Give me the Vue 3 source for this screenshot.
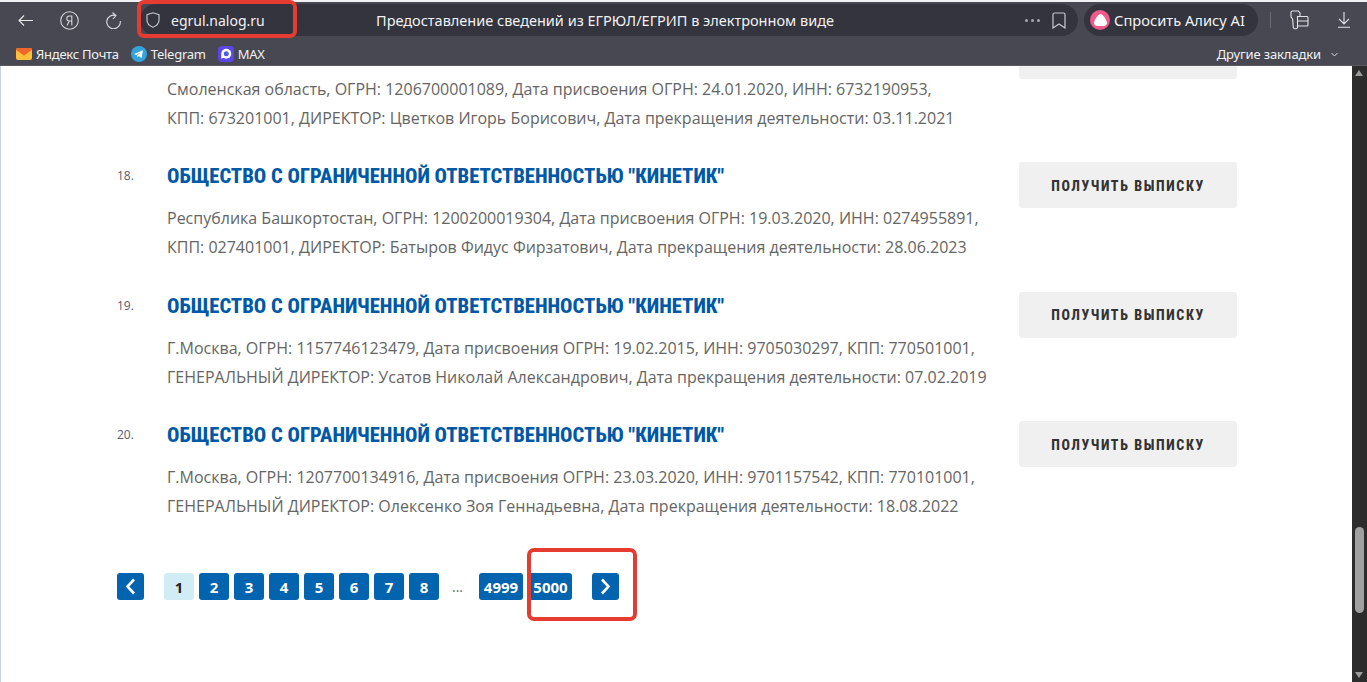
<script setup>
const rows = [
  { n: '', name: '', action: '', lines: ['Смоленская область, ОГРН: 1206700001089, Дата присвоения ОГРН: 24.01.2020, ИНН: 6732190953,', 'КПП: 673201001, ДИРЕКТОР: Цветков Игорь Борисович, Дата прекращения деятельности: 03.11.2021'] },
  { n: '18.', name: 'ОБЩЕСТВО С ОГРАНИЧЕННОЙ ОТВЕТСТВЕННОСТЬЮ "КИНЕТИК"', action: 'ПОЛУЧИТЬ ВЫПИСКУ', lines: ['Республика Башкортостан, ОГРН: 1200200019304, Дата присвоения ОГРН: 19.03.2020, ИНН: 0274955891,', 'КПП: 027401001, ДИРЕКТОР: Батыров Фидус Фирзатович, Дата прекращения деятельности: 28.06.2023'] },
  { n: '19.', name: 'ОБЩЕСТВО С ОГРАНИЧЕННОЙ ОТВЕТСТВЕННОСТЬЮ "КИНЕТИК"', action: 'ПОЛУЧИТЬ ВЫПИСКУ', lines: ['Г.Москва, ОГРН: 1157746123479, Дата присвоения ОГРН: 19.02.2015, ИНН: 9705030297, КПП: 770501001,', 'ГЕНЕРАЛЬНЫЙ ДИРЕКТОР: Усатов Николай Александрович, Дата прекращения деятельности: 07.02.2019'] },
  { n: '20.', name: 'ОБЩЕСТВО С ОГРАНИЧЕННОЙ ОТВЕТСТВЕННОСТЬЮ "КИНЕТИК"', action: 'ПОЛУЧИТЬ ВЫПИСКУ', lines: ['Г.Москва, ОГРН: 1207700134916, Дата присвоения ОГРН: 23.03.2020, ИНН: 9701157542, КПП: 770101001,', 'ГЕНЕРАЛЬНЫЙ ДИРЕКТОР: Олексенко Зоя Геннадьевна, Дата прекращения деятельности: 18.08.2022'] },
]
const pages = ['2', '3', '4', '5', '6', '7', '8']
</script>

<template>
  <div class="window">
    <header class="chrome">
      <div class="toolbar">
        <div class="nav">
          <svg width="15" height="11" viewBox="0 0 15 11" fill="none" stroke="#e8e8ea" stroke-width="1.100"><path d="M15 5.500H1M6 .5 1 5.500l5 5"/></svg>
          <svg width="19" height="19" viewBox="0 0 19 19" fill="none" stroke="#d8d8dc" stroke-width="1.100"><circle cx="9.500" cy="9.500" r="8.800"/><path d="M11.800 14.500V5H9.300a2.500 2.500 0 0 0 0 5h2.500M9.300 10 7 14.500"/></svg>
          <svg width="16" height="17" viewBox="0 0 16 17" fill="none" stroke="#d8d8dc" stroke-width="1.150"><path d="M10 3.600A6.800 6.800 0 1 0 14.300 9M6.500 .5 10 3.500 7 7"/></svg>
        </div>
        <div class="address">
          <div class="host">
            <svg width="14" height="16" viewBox="0 0 14 16" fill="none" stroke="#c2c2c8" stroke-width="1.200"><path d="M7 .8 1 2.600V8c0 3.500 2.600 5.900 6 7.200 3.400-1.300 6-3.700 6-7.200V2.600L7 .8Z"/></svg>
            <span>egrul.nalog.ru</span>
          </div>
          <div class="title">Предоставление сведений из ЕГРЮЛ/ЕГРИП в электронном виде</div>
          <div class="tail">
            <span class="dots"><i></i><i></i><i></i></span>
            <svg width="14" height="17" viewBox="0 0 14 17" fill="none" stroke="#c8c8cc" stroke-width="1.200"><path d="M1 2.500A1.500 1.500 0 0 1 2.500 1h9A1.500 1.500 0 0 1 13 2.500V16l-6-4-6 4V2.500Z"/></svg>
          </div>
        </div>
        <div class="alice">
          <span class="alice-icon"><svg width="13" height="12" viewBox="0 0 13 12"><path d="M6.500 0C9 0 13 6.500 13 9c0 2-1.800 3-3.200 3H3.200C1.800 12 0 11 0 9 0 6.500 4 0 6.500 0Z" fill="#fff"/></svg></span>
          <span>Спросить Алису AI</span>
        </div>
        <div class="divider"></div>
        <svg class="ext" width="19" height="20" viewBox="0 0 19 20" fill="none" stroke="#e4e4e8" stroke-width="1.100"><path d="M1 2.500C1 1.600 1.600 1 2.500 1h5.800l1.700 2v3.500H7.500v10.800c0 .9-.6 1.500-1.500 1.500H4.800c-.8 0-1.400-.5-1.500-1.300L2.600 9 1 7V2.500Z"/><path d="M10 6.500h7c.6 0 1 .4 1 1V15c0 .6-.4 1-1 1H7.500M7.500 11H18"/></svg>
        <svg class="dl" width="12" height="16" viewBox="0 0 12 16" fill="none" stroke="#e4e4e8" stroke-width="1.100"><path d="M6 0v11.500M1 6.800 6 12l5-5.200M0 15.300h12"/></svg>
      </div>
      <div class="bookmarks">
        <div class="mark">
          <svg width="16" height="12" viewBox="0 0 16 12"><rect width="16" height="12" rx="2" fill="#fdbf3a"/><path d="M0 2a2 2 0 0 1 2-2h12a2 2 0 0 1 2 2L8 7.500 0 2Z" fill="#f2652a"/></svg>
          <span>Яндекс Почта</span>
        </div>
        <div class="mark">
          <svg width="16" height="16" viewBox="0 0 16 16"><circle cx="8" cy="8" r="8" fill="#34a4dc"/><path d="M3 7.900 12 4.200 10.600 12 7.800 10 6.400 11.200 6.200 9.200 10.200 5.900 5.300 9 3 7.900Z" fill="#fff"/></svg>
          <span>Telegram</span>
        </div>
        <div class="mark">
          <svg width="16" height="16" viewBox="0 0 16 16"><rect width="16" height="16" rx="4" fill="#5b46e6"/><circle cx="8.300" cy="7.800" r="5" fill="#fff"/><circle cx="8.300" cy="7.800" r="2.500" fill="#4a5de8"/><path d="M3.300 8v4.800L6 11.500Z" fill="#fff"/></svg>
          <span>MAX</span>
        </div>
        <div class="other">
          <span>Другие закладки</span>
          <svg width="7" height="5" viewBox="0 0 7 5" fill="none" stroke="#d8d8dc" stroke-width="1"><path d="m.5 1 3 3 3-3"/></svg>
        </div>
      </div>
    </header>

    <main class="view">
      <div class="page">
        <div class="list">
          <article v-for="(r, i) in rows" :key="i" class="row">
            <div class="num">{{ r.n }}</div>
            <div class="body">
              <a class="name">{{ r.name }}</a>
              <p v-for="l in r.lines" :key="l" class="line">{{ l }}</p>
            </div>
            <button class="get">{{ r.action }}</button>
          </article>
        </div>
        <nav class="pager">
          <a class="pg arrow"><svg width="11" height="17" viewBox="0 0 11 17" fill="none" stroke="#fff" stroke-width="2.600"><path d="M9 1.500 2.500 8.500 9 15.500"/></svg></a>
          <a class="pg current">1</a>
          <a v-for="p in pages" :key="p" class="pg">{{ p }}</a>
          <span class="ell">...</span>
          <a class="pg wide">4999</a>
          <a class="pg wide five">5000</a>
          <a class="pg arrow next"><svg width="11" height="17" viewBox="0 0 11 17" fill="none" stroke="#fff" stroke-width="2.600"><path d="m2 1.500 6.500 7-6.500 7"/></svg></a>
        </nav>
      </div>
      <aside class="scrollbar">
        <i class="up"></i>
        <i class="thumb"></i>
        <i class="down"></i>
      </aside>
    </main>

    <div class="mark-box url"></div>
    <div class="mark-box last"></div>
  </div>
</template>

<style>
html, body { margin: 0; overflow: hidden; background: #fff; }
</style>

<style scoped>
.window { position: relative; width: 1367px; height: 682px; overflow: hidden; display: flex; flex-direction: column; font-family: "Open Sans", sans-serif; }
.chrome { height: 66px; flex: none; background: #474852; color: #f1f1f3; padding-top: 2px; box-sizing: border-box; border-top: 2px solid #f2f2f4; border-bottom: 1px solid #5a5a60; }
.toolbar { height: 32px; display: flex; align-items: center; }
.nav { width: 140px; flex: none; display: flex; align-items: center; padding-left: 18px; gap: 27px; box-sizing: border-box; }
.address { width: 938px; height: 32px; flex: none; background: #33343e; border-radius: 16px; display: flex; align-items: center; box-sizing: border-box; padding-left: 6px; position: relative; }
.host { display: flex; align-items: center; gap: 11px; font-family: "Noto Sans", sans-serif; font-size: 14px; }
.title { position: absolute; left: 236px; font-family: "Noto Sans", sans-serif; font-size: 14.500px; white-space: nowrap; }
.tail { margin-left: auto; display: flex; align-items: center; gap: 12px; padding-right: 12px; }
.dots { display: flex; gap: 3px; }
.dots i { width: 3px; height: 3px; border-radius: 50%; background: #a8a8ae; }
.alice { width: 174px; height: 32px; margin-left: 6px; flex: none; background: #33343e; border-radius: 16px; display: flex; align-items: center; gap: 4px; padding-left: 6px; box-sizing: border-box; font-family: "Noto Sans", sans-serif; font-size: 14.700px; }
.alice-icon { width: 20px; height: 20px; border-radius: 50%; background: #ef5a8c; display: flex; align-items: center; justify-content: center; }
.divider { width: 1px; height: 16px; background: #6b6b73; margin-left: 12px; }
.ext { margin-left: 19px; }
.dl { margin-left: 29px; }
.bookmarks { height: 24px; margin-top: 6px; display: flex; align-items: center; padding: 0 29px 0 16px; gap: 12px; font-family: "Noto Sans", sans-serif; font-size: 13px; letter-spacing: -.25px; }
.mark { display: flex; align-items: center; gap: 4px; }
.other { margin-left: auto; display: flex; align-items: center; gap: 10px; letter-spacing: -.12px; }
.view { flex: 1; display: flex; min-height: 0; background: #fff; overflow: hidden; border-left: 1px solid #c9d0e2; }
.page { flex: 1; min-width: 0; padding: 0 115px 0 116px; margin-top: -33.500px; }
.row { display: flex; height: 129.500px; }
.num { width: 50px; flex: none; font-size: 12px; color: #5a5a72; line-height: 20px; padding-top: 4px; box-sizing: border-box; }
.body { flex: 1; min-width: 0; }
.name { display: block; min-height: 29px; font-family: "Roboto Condensed", "Roboto", sans-serif; font-stretch: 75%; font-weight: 800; font-size: 20.600px; line-height: 29px; color: #0059a6; white-space: nowrap; margin-bottom: 13px; }
.line { margin: 0; font-size: 16px; line-height: 29px; color: #656565; white-space: nowrap; }
.get { width: 218px; height: 46px; flex: none; border: 0; border-radius: 3px; background: #f0f0f0; color: #333; font-family: "Roboto Condensed", "Roboto", sans-serif; font-stretch: 75%; font-weight: 800; font-size: 14px; letter-spacing: 1.600px; padding: 1px 0 0; }
.pager { display: flex; align-items: center; margin-top: 22.500px; font-family: "Open Sans", sans-serif; }
.pg { width: 30px; height: 27px; margin-right: 5px; border-radius: 3px; background: #0263ae; color: #fff; font-weight: 700; font-size: 15px; display: flex; align-items: center; justify-content: center; flex: none; }
.arrow { width: 27px; margin-right: 20px; }
.current { background: #d2ecf6; color: #222; }
.ell { width: 35px; box-sizing: border-box; padding-left: 8px; color: #666; font-size: 14px; }
.wide { width: 44px; margin-right: 6px; }
.five { width: 43px; margin-right: 20px; }
.next { margin: 0; }
.scrollbar { width: 15px; flex: none; background: #2c2c2c; position: relative; }
.up { position: absolute; left: 3px; top: 4px; border: 4.500px solid transparent; border-top: 0; border-bottom: 6px solid #9a9a9a; }
.down { position: absolute; left: 3px; bottom: 4px; border: 4.500px solid transparent; border-bottom: 0; border-top: 6px solid #9a9a9a; }
.thumb { position: absolute; left: 3px; top: 461px; width: 9px; height: 86px; border-radius: 5px; background: #a0a0a0; }
.mark-box { position: absolute; border: 4.500px solid #e53b30; border-radius: 7px; box-sizing: border-box; }
.url { left: 137px; top: 0; width: 160px; height: 38px; }
.last { left: 527px; top: 548px; width: 110px; height: 73px; }
</style>
